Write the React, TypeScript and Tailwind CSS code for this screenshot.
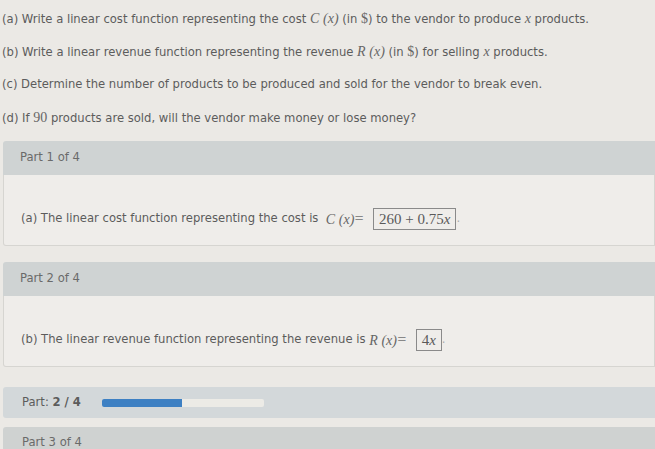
import React from "react";

const questions: { label: string; body: React.ReactNode }[] = [
	{
		label: "(a)",
		body: (
			<>
				Write a linear cost function representing the cost <M>C</M> <M>(x)</M> (in <S>$</S>) to the vendor to
				produce <M>x</M> products.
			</>
		),
	},
	{
		label: "(b)",
		body: (
			<>
				Write a linear revenue function representing the revenue <M>R</M> <M>(x)</M> (in <S>$</S>) for selling{" "}
				<M>x</M> products.
			</>
		),
	},
	{
		label: "(c)",
		body: <>Determine the number of products to be produced and sold for the vendor to break even.</>,
	},
	{
		label: "(d)",
		body: (
			<>
				If <S>90</S> products are sold, will the vendor make money or lose money?
			</>
		),
	},
];

// math-ish italic serif
function M({ children }: { children: React.ReactNode }) {
	return <span className="font-['Liberation_Serif',serif] italic text-[14px] text-[#666]">{children}</span>;
}

function S({ children }: { children: React.ReactNode }) {
	return <span className="font-['Liberation_Serif',serif] text-[14px] text-[#666]">{children}</span>;
}

function PartBlock({ title, children }: { title: string; children: React.ReactNode }) {
	return (
		<div className="ml-[3px]">
			<div className="h-[34px] bg-[#cfd3d3] rounded-tl-[3px] flex items-center pl-[17px] text-[#6a6a6a]">{title}</div>
			<div className="h-[71px] border border-t-0 border-[#d6d5d1] rounded-bl-[3px] bg-[#efedea] flex items-start pt-[34px] pl-[17px]">
				{children}
			</div>
		</div>
	);
}

function Answer({ children }: { children: React.ReactNode }) {
	return (
		<span className="inline-flex items-center">
			<span className="ml-[9px] border border-[#8a8a8a] px-[5px] h-[22px] flex items-center font-['Liberation_Serif',serif] text-[15px] text-[#5a5a5a]">
				{children}
			</span>
			<span className="text-[#aaa]">.</span>
		</span>
	);
}

export default function App() {
	return (
		<div className="w-[655px] h-[449px] overflow-hidden bg-[#ebe9e5] font-['DejaVu_Sans',sans-serif] text-[11.6px] text-[#5c5c5c]">
			<div className="flex flex-col gap-[16px] pt-[10px] pl-[2px]">
				{questions.map((q) => (
					<div key={q.label} className="h-[17px] flex items-center whitespace-nowrap">
						<span>
							{q.label} {q.body}
						</span>
					</div>
				))}
			</div>

			<div className="mt-[15px]">
				<PartBlock title="Part 1 of 4">
					<span className="whitespace-nowrap flex items-center h-[20px]">
						(a) The linear cost function representing the cost is&nbsp;&nbsp;<M>C</M>&nbsp;<M>(x)</M>
						<span className="text-[#888]">=</span>
						<Answer>
							260 + 0.75<i>x</i>
						</Answer>
					</span>
				</PartBlock>
			</div>

			<div className="mt-[16px]">
				<PartBlock title="Part 2 of 4">
					<span className="whitespace-nowrap flex items-center h-[20px]">
						(b) The linear revenue function representing the revenue is&nbsp;<M>R</M>&nbsp;<M>(x)</M>
						<span className="text-[#888]">=</span>
						<Answer>
							4<i>x</i>
						</Answer>
					</span>
				</PartBlock>
			</div>

			<div className="mt-[20px] ml-[3px] h-[31px] bg-[#d3d8da] rounded-l-[3px] flex items-center pl-[19px] gap-[21px]">
				<span>
					Part: <span className="font-bold">2 / 4</span>
				</span>
				<div className="w-[162px] h-[8px] bg-[#ecebe6] rounded-[2px] overflow-hidden flex">
					<div className="w-[80px] h-full bg-[#3d80c3]" />
				</div>
			</div>

			<div className="mt-[9px] ml-[3px] h-[34px] bg-[#cfd2d1] rounded-tl-[3px] pl-[19px] pt-[7px] text-[#6a6a6a]">Part 3 of 4</div>
		</div>
	);
}
